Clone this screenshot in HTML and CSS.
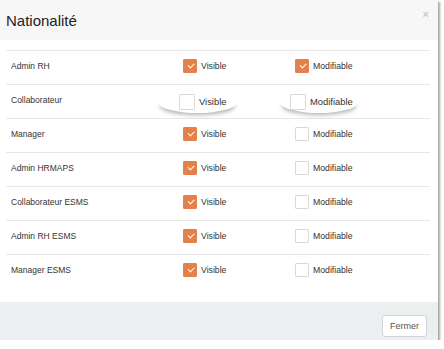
FILE: index.html
```html
<!DOCTYPE html>
<html lang="fr">
<head>
  <meta charset="UTF-8" />
  <title>Nationalité</title>
  <link rel="stylesheet" href="styles.css">
</head>
<body>
  <div class="modal">
    <div class="modal-header">
      <h2>Nationalité</h2>
      <span class="close">&times;</span>
    </div>

    <div class="modal-body">
      <div class="row">
        <span class="role">Admin RH</span>
        <label class="check"><span class="box checked"></span>Visible</label>
        <label class="check"><span class="box checked"></span>Modifiable</label>
      </div>
      <div class="row">
        <span class="role">Collaborateur</span>
        <label class="check lifted lifted-a"><span class="box"></span>Visible</label>
        <label class="check lifted lifted-b"><span class="box"></span>Modifiable</label>
      </div>
      <div class="row">
        <span class="role">Manager</span>
        <label class="check"><span class="box checked"></span>Visible</label>
        <label class="check"><span class="box"></span>Modifiable</label>
      </div>
      <div class="row">
        <span class="role">Admin HRMAPS</span>
        <label class="check"><span class="box checked"></span>Visible</label>
        <label class="check"><span class="box"></span>Modifiable</label>
      </div>
      <div class="row">
        <span class="role">Collaborateur ESMS</span>
        <label class="check"><span class="box checked"></span>Visible</label>
        <label class="check"><span class="box"></span>Modifiable</label>
      </div>
      <div class="row">
        <span class="role">Admin RH ESMS</span>
        <label class="check"><span class="box checked"></span>Visible</label>
        <label class="check"><span class="box"></span>Modifiable</label>
      </div>
      <div class="row">
        <span class="role">Manager ESMS</span>
        <label class="check"><span class="box checked"></span>Visible</label>
        <label class="check"><span class="box"></span>Modifiable</label>
      </div>
    </div>

    <div class="modal-footer">
      <button type="button">Fermer</button>
    </div>
  </div>
</body>
</html>
```

FILE: styles.css
```css
body {
  margin: 0;
  background-color: #fff;
  font-family: "Liberation Sans", Arial, sans-serif;
  color: #333;
}

.modal {
  width: 438px;
  height: 340px;
  display: flex;
  flex-direction: column;
  background-color: #fff;
  box-shadow: 2px 2px 2px rgba(0, 0, 0, 0.35);
}

.modal-header {
  height: 40px;
  background-color: #f7f7f7;
  display: flex;
  align-items: center;
  justify-content: space-between;
  padding: 0 9px 0 6px;
}

.modal-header h2 {
  margin: 0;
  font-size: 15px;
  font-weight: normal;
  color: #222;
}

.close {
  font-size: 11px;
  font-weight: bold;
  color: #c8c8c8;
  margin-top: -12px;
}

.modal-body {
  flex: 1;
  padding: 10px 8px 0 6px;
}

.row {
  height: 34px;
  border-top: 1px solid #e6e6e6;
  display: grid;
  grid-template-columns: 172px 112px 1fr;
  align-items: center;
  padding: 0 0 3px 5px;
  box-sizing: border-box;
  font-size: 8.5px;
}

.check {
  display: flex;
  align-items: center;
  font-size: 8.7px;
  color: #333;
}

.box {
  width: 14px;
  height: 14px;
  box-sizing: border-box;
  border: 1px solid #d9d9d9;
  border-radius: 1px;
  background-color: #fff;
  margin-right: 4px;
  position: relative;
}

.box.checked {
  background-color: #e4814b;
  border-color: #e4814b;
}

.box.checked::after {
  content: "";
  position: absolute;
  left: 3.5px;
  top: 3px;
  width: 5px;
  height: 2.5px;
  border-left: 1.5px solid #fff;
  border-bottom: 1.5px solid #fff;
  transform: rotate(-45deg);
}

.lifted {
  font-size: 9.4px;
  background-color: #fff;
  border-radius: 50%;
  height: 22px;
  margin-top: 3px;
  box-shadow: 0 4px 4px -2px rgba(0, 0, 0, 0.3);
  justify-self: start;
}

.lifted .box {
  width: 16px;
  height: 16px;
}

.lifted-a {
  margin-left: -25px;
  padding: 0 11px 0 21px;
}

.lifted-b {
  margin-left: -15px;
  padding: 0 5px 0 10px;
}

.modal-footer {
  height: 38px;
  background-color: #ecefef;
  display: flex;
  justify-content: flex-end;
  align-items: center;
  padding: 0 11px;
}

button {
  margin-top: 10px;
  width: 45px;
  height: 22px;
  background-color: #fff;
  border: 1px solid #d4d4d4;
  border-radius: 3px;
  font-family: "Liberation Sans", Arial, sans-serif;
  font-size: 9px;
  color: #555;
  padding: 0;
}
```
